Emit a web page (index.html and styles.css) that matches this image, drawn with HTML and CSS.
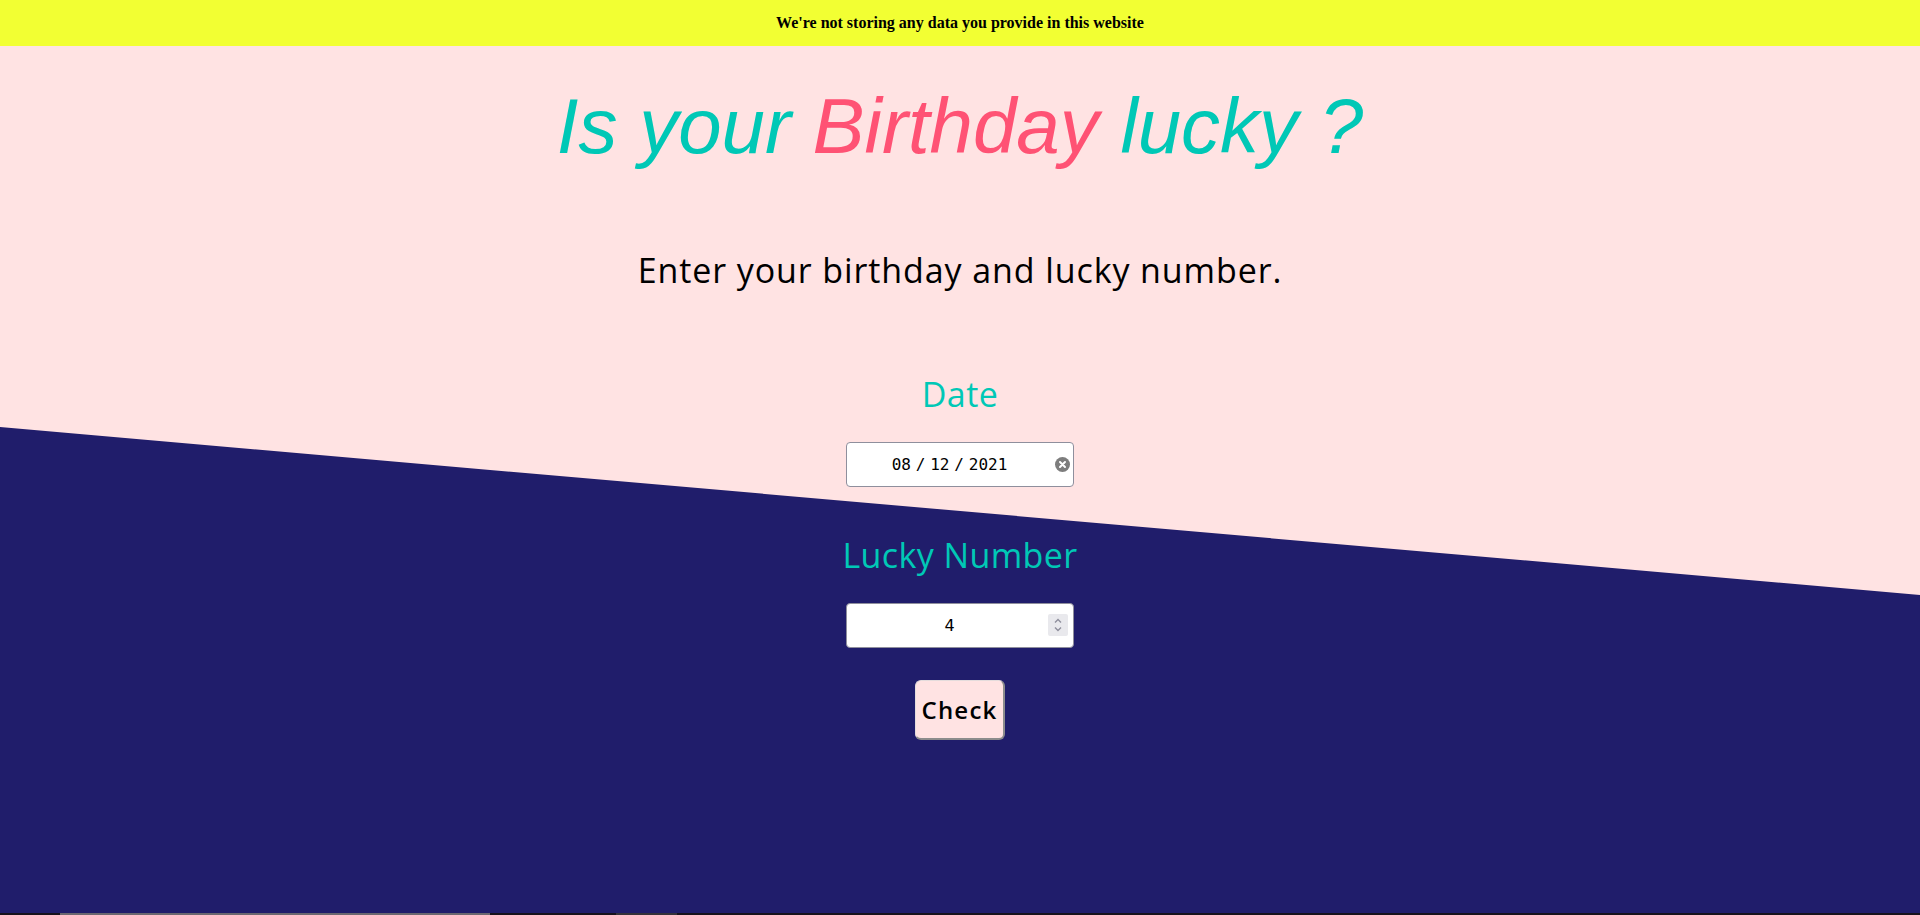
FILE: index.html
```html
<!DOCTYPE html>
<html lang="en">
<head>
<meta charset="utf-8">
<title>Is your Birthday lucky ?</title>
<link rel="stylesheet" href="styles.css">
</head>
<body>
<div class="page">
  <header class="notice">We're not storing any data you provide in this website</header>
  <main class="hero">
    <div class="content">
      <h1 class="title">Is your <span class="accent">Birthday</span> lucky ?</h1>
      <p class="subtitle">Enter your birthday and lucky number.</p>
      <form class="form">
        <label class="label" for="dob">Date</label>
        <div class="field">
          <input id="dob" class="input input-date" type="text" value="08 / 12 / 2021" readonly>
          <span class="clear-btn" aria-hidden="true">
            <svg width="15" height="15" viewBox="0 0 15 15"><circle cx="7.5" cy="7.5" r="7.5" fill="#7d7d7d"/><path d="M5 5 L10 10 M10 5 L5 10" stroke="#fff" stroke-width="2" stroke-linecap="round"/></svg>
          </span>
        </div>
        <label class="label label-lucky" for="lucky">Lucky Number</label>
        <div class="field">
          <input id="lucky" class="input input-number" type="text" value="4">
          <span class="spinner" aria-hidden="true">
            <svg width="20" height="22" viewBox="0 0 20 22"><path d="M7 8.5 L10 5.5 L13 8.5" fill="none" stroke="#8f8f9d" stroke-width="1.4"/><path d="M7 13.5 L10 16.5 L13 13.5" fill="none" stroke="#8f8f9d" stroke-width="1.4"/></svg>
          </span>
        </div>
        <button class="check-btn" type="button">Check</button>
      </form>
    </div>
  </main>
  <div class="strip"><span class="strip-seg strip-seg-a"></span><span class="strip-seg strip-seg-b"></span></div>
</div>
</body>
</html>
```

FILE: styles.css
```css
* { box-sizing: border-box; }

html, body {
  margin: 0;
  padding: 0;
  height: 100%;
}

body {
  overflow: hidden;
  font-family: "Open Sans", "Noto Sans", sans-serif;
}

.page {
  display: flex;
  flex-direction: column;
  height: 100vh;
}

.notice {
  flex: 0 0 46px;
  display: flex;
  align-items: center;
  justify-content: center;
  background: #f2ff33;
  color: #000;
  font: 700 16px "Liberation Serif", "Times New Roman", serif;
}

.hero {
  flex: 1 1 auto;
  position: relative;
  background: #201d6b;
  overflow: hidden;
}

.hero::before {
  content: "";
  position: absolute;
  inset: 0;
  background: #ffe3e3;
  clip-path: polygon(0 0, 100% 0, 100% 549px, 0 381px);
}

.content {
  position: relative;
  z-index: 1;
  display: flex;
  flex-direction: column;
  align-items: center;
  text-align: center;
}

.title {
  margin: 35px 0 0;
  font: italic 400 78px/90px "Liberation Sans", Arial, sans-serif;
  letter-spacing: 0;
  color: #00c8b6;
}

.accent {
  color: #ff5274;
}

.subtitle {
  margin: 77px 0 0;
  font: 500 34px/44px "Open Sans", "Noto Sans", sans-serif;
  letter-spacing: 0.9px;
  color: #000;
}

.form {
  display: flex;
  flex-direction: column;
  align-items: center;
  margin-top: 78px;
}

.label {
  display: block;
  font: 400 34px/48px "Open Sans", "Noto Sans", sans-serif;
  letter-spacing: 0.4px;
  color: #00c8b6;
}

.label-lucky {
  margin-top: 44px;
}

.field {
  position: relative;
  width: 228px;
  height: 45px;
  margin-top: 24px;
}

.input {
  display: block;
  width: 100%;
  height: 100%;
  margin: 0;
  padding: 0 21px 0 0;
  border: 1px solid #8f8f9d;
  border-radius: 4px;
  background: #fff;
  color: #000;
  text-align: center;
  outline: none;
}

.input-date {
  font: 400 16px "DejaVu Sans Mono", "Liberation Mono", monospace;
  word-spacing: -4.8px;
}

.input-number {
  font: 400 16px "DejaVu Sans", "Liberation Sans", sans-serif;
}

.clear-btn {
  position: absolute;
  right: 4px;
  top: 15px;
  width: 15px;
  height: 15px;
  display: flex;
}

.spinner {
  position: absolute;
  right: 6px;
  top: 11px;
  width: 20px;
  height: 22px;
  display: flex;
  background: #e9e9ed;
  border-radius: 2px;
}

.check-btn {
  margin-top: 32px;
  height: 60px;
  padding: 0 6px;
  border-style: solid;
  border-width: 1px 2px 2px 1px;
  border-color: #e4dcdc #8c8c8c #8c8c8c #e4dcdc;
  border-radius: 6px;
  background: #ffe3e3;
  color: #000;
  font: 600 24px "Open Sans", "Noto Sans", sans-serif;
  letter-spacing: 1.2px;
  cursor: pointer;
}

.strip {
  flex: 0 0 2px;
  display: flex;
  padding-left: 60px;
  background: #16121c;
}

.strip-seg-a {
  width: 430px;
  background: #6a6870;
}

.strip-seg-b {
  width: 61px;
  margin-left: 126px;
  background: #34323a;
}
```
